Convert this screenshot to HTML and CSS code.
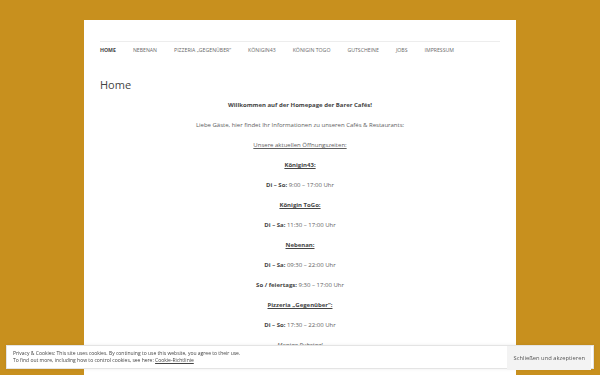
FILE: index.html
```html
<!DOCTYPE html>
<html lang="de">
<head>
  <meta charset="UTF-8">
  <title>Barer Cafés</title>
  <link rel="stylesheet" href="styles.css">
</head>
<body>
  <div id="page" class="site">
    <header class="site-header">
      <nav class="main-navigation">
        <ul class="nav-menu">
          <li class="current"><a href="#">Home</a></li>
          <li><a href="#">Nebenan</a></li>
          <li><a href="#">Pizzeria „Gegenüber“</a></li>
          <li><a href="#">Königin43</a></li>
          <li><a href="#">Königin ToGo</a></li>
          <li><a href="#">Gutscheine</a></li>
          <li><a href="#">Jobs</a></li>
          <li><a href="#">Impressum</a></li>
        </ul>
      </nav>
    </header>

    <article class="page">
      <h1 class="entry-title">Home</h1>
      <div class="entry-content">
        <p><strong>Willkommen auf der Homepage der Barer Cafés!</strong></p>
        <p>Liebe Gäste, hier findet Ihr Informationen zu unseren Cafés &amp; Restaurants:</p>
        <p><span class="u">Unsere aktuellen Öffnungszeiten:</span></p>
        <p><strong class="u">Königin43:</strong></p>
        <p><strong>Di – So:</strong> 9:00 – 17:00 Uhr</p>
        <p><strong class="u">Königin ToGo:</strong></p>
        <p><strong>Di – Sa:</strong> 11:30 – 17:00 Uhr</p>
        <p><strong class="u">Nebenan:</strong></p>
        <p><strong>Di – Sa:</strong> 09:30 – 22:00 Uhr</p>
        <p><strong>So / feiertags:</strong> 9:30 – 17:00 Uhr</p>
        <p><strong class="u">Pizzeria „Gegenüber“:</strong></p>
        <p><strong>Di – So:</strong> 17:30 – 22:00 Uhr</p>
        <p><em>Montag Ruhetag!</em></p>
      </div>
    </article>
  </div>

  <div class="cookie-banner">
    <div class="cookie-text">
      Privacy &amp; Cookies: This site uses cookies. By continuing to use this website, you agree to their use.<br>
      To find out more, including how to control cookies, see here: <a href="#">Cookie-Richtlinie</a>
    </div>
    <button class="cookie-accept">Schließen und akzeptieren</button>
  </div>
</body>
</html>
```

FILE: styles.css
```css
html, body {
  margin: 0;
  padding: 0;
  height: 100%;
}

body {
  background-color: #c8901e;
  font-family: "Open Sans", "DejaVu Sans", sans-serif;
  color: #444;
  overflow: hidden;
}

.site {
  width: 400px;
  height: calc(100% - 20px);
  margin: 20px auto 0;
  padding: 0 16px;
  background-color: #fff;
  overflow: hidden;
}

.site-header {
  padding-top: 21px;
}

.main-navigation {
  border-top: 1px solid #ededed;
}

.nav-menu {
  list-style: none;
  margin: 0;
  padding: 0;
  display: flex;
  gap: 17px;
}

.nav-menu li {
  line-height: 16px;
  font-size: 5.2px;
  text-transform: uppercase;
}

.nav-menu a {
  color: #6a6a6a;
  text-decoration: none;
}

.nav-menu li.current a {
  color: #444;
  font-weight: bold;
}

.entry-title {
  margin: 20px 0 8px;
  font-size: 11px;
  line-height: 14px;
  font-weight: normal;
  color: #444;
}

.entry-content {
  text-align: center;
  font-size: 6px;
  line-height: 10px;
  color: #5e5e5e;
}

.entry-content p {
  margin: 0 0 10px;
}

.entry-content strong {
  color: #444;
}

.u {
  text-decoration: underline;
}

.cookie-banner {
  position: fixed;
  left: 6px;
  right: 6px;
  bottom: 6px;
  height: 22px;
  background-color: #fff;
  border: 1px solid #e4e4e4;
  box-shadow: 0 0 3px rgba(0, 0, 0, 0.08);
  display: flex;
  align-items: center;
  justify-content: space-between;
  padding-left: 6px;
}

.cookie-text {
  font-size: 5px;
  line-height: 7px;
  color: #444;
}

.cookie-text a {
  color: #444;
  text-decoration: underline;
}

.cookie-accept {
  align-self: flex-start;
  height: 24px;
  margin-right: 2px;
  padding: 0 6px;
  border: none;
  background-color: #f3f3f3;
  color: #555;
  font-family: "Open Sans", "DejaVu Sans", sans-serif;
  font-size: 5.8px;
}
```
